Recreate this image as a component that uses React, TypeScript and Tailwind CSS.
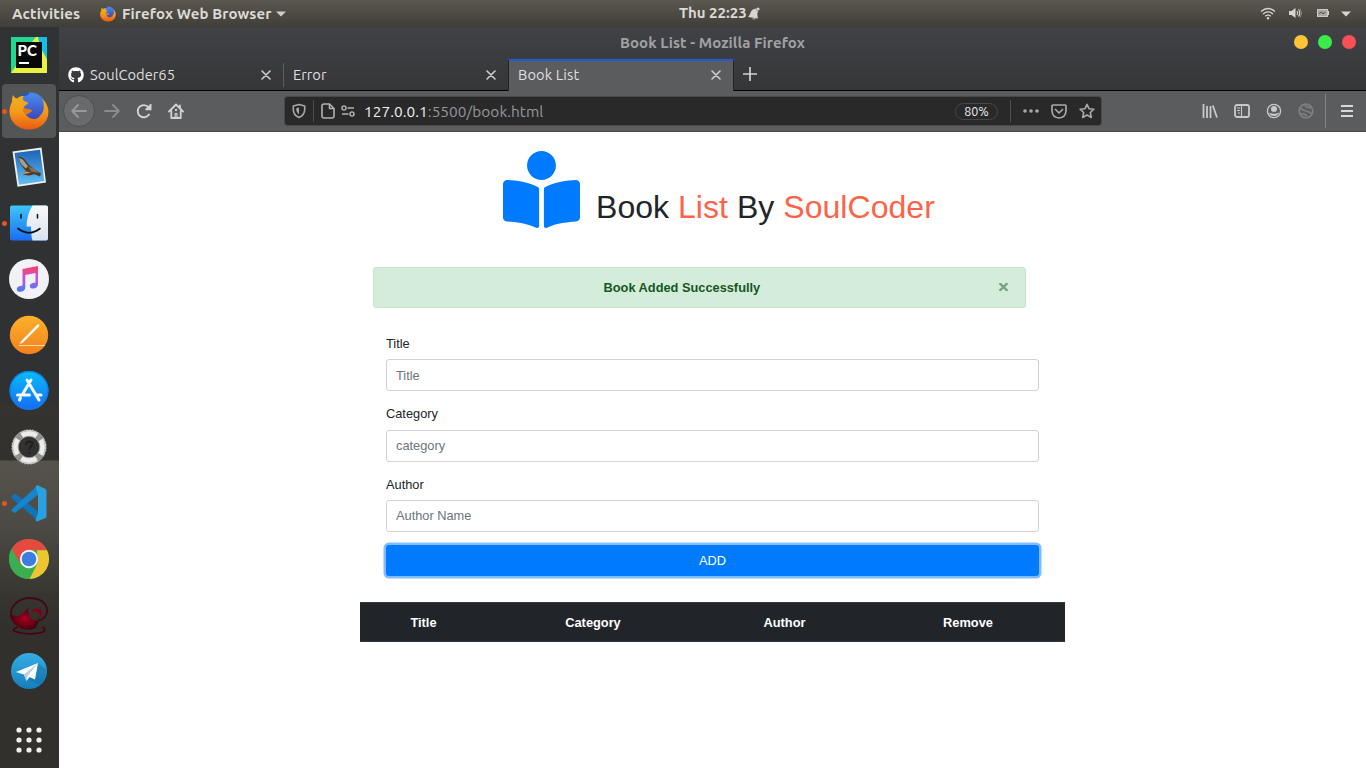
import React from "react";
import { FaBookReader, FaGithub } from "react-icons/fa";

const UI = "font-['Ubuntu','Noto_Sans',sans-serif]";

function FirefoxLogo({ size, id }: { size: number; id: string }) {
  return (
    <svg width={size} height={size} viewBox="0 0 40 40">
      <defs>
        <linearGradient id={`${id}o`} x1="0" y1="0" x2="0" y2="1">
          <stop offset="0" stopColor="#f0b01c" />
          <stop offset="0.5" stopColor="#f39a1b" />
          <stop offset="1" stopColor="#ea5a12" />
        </linearGradient>
        <linearGradient id={`${id}b`} x1="0" y1="0" x2="0" y2="1">
          <stop offset="0" stopColor="#4a8df0" />
          <stop offset="1" stopColor="#3b43b8" />
        </linearGradient>
      </defs>
      <ellipse cx="21.500" cy="15.500" rx="14.500" ry="14" fill={`url(#${id}b)`} />
      <path d="M9 6Q14 1 21 1.500L19 4L14 5.500L12 8Z" fill="#2a55b0" />
      <path
        d="M4 4C5 6 6 7 8 7.500C10 5.500 12 5 15 5C13.500 6.500 13.500 8 14.500 9.500C16 10.800 18.800 10.500 19 12C18.500 13.800 15 14.500 14.700 17C16 18 18 17.800 20 18.500C22 18.500 23 19.300 22.500 20.500C21 20.500 20 23.200 16.500 23C20 28.500 26 29.500 30 26C31 24 33.500 23 34.500 19C35 15 35 11 33 7.500C37 11 39.500 16 39.500 21C39 32 31 38.500 20 38.500C9 38.500 .5 31 .5 20.500C.5 16 2 13 3 11C3 8 3.300 6 4 4Z"
        fill={`url(#${id}o)`}
      />
      <path d="M14.500 17C16 18 18 17.800 20 18.500C22 18.500 23 19.300 22.500 20.500C20.500 20.500 20 23 16.500 23C14.500 22 13 19 14.500 17Z" fill="#e97a12" />
    </svg>
  );
}

function PyCharm() {
  return (
    <svg width="40" height="40" viewBox="0 0 40 40">
      <rect x="2" y="2" width="36" height="36" fill="#21d789" />
      <path d="M22 8L27 2H29L31 8L38 24V38H2L9 28Z" fill="#e9f23e" />
      <path d="M29 2H38V24L31 12Z" fill="#14bfe8" />
      <path d="M2 2H26L20 8L7 28L2 34Z" fill="#22d88f" />
      <rect x="7" y="7" width="26" height="26" fill="#080808" />
      <text x="8.500" y="21" fontFamily="Lato, Liberation Sans, sans-serif" fontWeight="900" fontSize="15" fill="#fff">PC</text>
      <rect x="10" y="27" width="10" height="2" fill="#fff" />
    </svg>
  );
}

function MailStamp() {
  return (
    <svg width="40" height="40" viewBox="0 0 40 40">
      <defs>
        <linearGradient id="stamp" x1="0" y1="0" x2="0" y2="1">
          <stop offset="0" stopColor="#1d62b8" />
          <stop offset="1" stopColor="#62bff5" />
        </linearGradient>
      </defs>
      <path d="M3.500 4.500L32.500 0.500L37 35.500L8.500 39.800Z" fill="#f1f1ec" />
      <path d="M5.500 6L31 2.700L35.300 34L10 37.800Z" fill="url(#stamp)" />
      <path d="M9.500 9.500C13 9.500 16 12 18 15.500C20 18.500 23 20 25 22L32 26.500L31 29.500L25 27C21 29.500 17 28 14 27.500L17 24C13 20 10 15 9.500 9.500Z" fill="#4b3b27" />
      <path d="M10 11C15 12 16 16 19 19L17 21.500C13 19 10.500 15 10 11Z" fill="#a59f8e" />
      <path d="M19 19.500L25 21.500L30 26L22 24.500Z" fill="#876d49" />
      <path d="M13 27.500L17 24.500L22 25.500Z" fill="#d69a42" />
    </svg>
  );
}

function Finder() {
  return (
    <svg width="40" height="40" viewBox="0 0 40 40">
      <defs>
        <linearGradient id="finderL" x1="0" y1="0" x2="0" y2="1">
          <stop offset="0" stopColor="#3ec6fa" />
          <stop offset="1" stopColor="#1b6df2" />
        </linearGradient>
        <linearGradient id="finderR" x1="0" y1="0" x2="0" y2="1">
          <stop offset="0" stopColor="#f7f8fa" />
          <stop offset="1" stopColor="#d9e3ee" />
        </linearGradient>
      </defs>
      <rect x="1" y="2.500" width="38" height="35" rx="2" fill="url(#finderL)" />
      <path d="M23.500 2.500H37Q39 2.500 39 4.500V35.500Q39 37.500 37 37.500H23.500Q22 33 22 23.500H17.500Q18 11 23.500 2.500Z" fill="url(#finderR)" />
      <path d="M12 11.500V15M28.500 11.500V15" stroke="#111" strokeWidth="1.500" strokeLinecap="round" />
      <path d="M9 25.500Q20 34 31 25.500" fill="none" stroke="#111" strokeWidth="1.600" strokeLinecap="round" />
    </svg>
  );
}

function Music() {
  return (
    <svg width="40" height="40" viewBox="0 0 40 40">
      <defs>
        <linearGradient id="note" x1="0" y1="0" x2="0" y2="1">
          <stop offset="0" stopColor="#fb4062" />
          <stop offset="0.5" stopColor="#c356dd" />
          <stop offset="1" stopColor="#3a80f6" />
        </linearGradient>
      </defs>
      <circle cx="20" cy="20" r="20" fill="#f2f2f6" />
      <path d="M13.500 10L29 7V25C29 30.500 20.500 31 20.800 27C21 24 24.500 24 26.500 23.500V14L16.300 16V28.500C16.300 33.500 7.500 34.500 7.800 30C8 27 11.500 27.200 13.500 26.500Z" fill="url(#note)" />
    </svg>
  );
}

function Pages() {
  return (
    <svg width="40" height="40" viewBox="0 0 40 40">
      <defs>
        <linearGradient id="pages" x1="0" y1="0" x2="0" y2="1">
          <stop offset="0" stopColor="#fcb02c" />
          <stop offset="1" stopColor="#f3821c" />
        </linearGradient>
      </defs>
      <circle cx="20" cy="20" r="19.200" fill="url(#pages)" />
      <path d="M10 30.500H36" stroke="#fbd9a6" strokeWidth="1" />
      <path d="M10.500 29L12.500 25.800L28 10Q30 8.500 30.300 9.800Q30.500 11 29.500 12L14 27.500Z" fill="#fff" />
    </svg>
  );
}

function AppStore() {
  return (
    <svg width="40" height="40" viewBox="0 0 40 40">
      <defs>
        <linearGradient id="store" x1="0" y1="0" x2="0" y2="1">
          <stop offset="0" stopColor="#06bdfc" />
          <stop offset="1" stopColor="#176bf5" />
        </linearGradient>
      </defs>
      <circle cx="20" cy="19.500" r="19.500" fill="url(#store)" />
      <circle cx="20" cy="19.500" r="18.900" fill="none" stroke="#0b7ee8" strokeWidth="1.200" />
      <g stroke="#f5f8fb" strokeWidth="3" strokeLinecap="round" fill="none">
        <path d="M18 9L30 29M22 9L14 22.500M11.500 27L10.500 29M8.500 24H20.500M27 24H32" />
      </g>
    </svg>
  );
}

function Lifebuoy() {
  return (
    <svg width="40" height="40" viewBox="0 0 40 40">
      <circle cx="20" cy="20" r="17.300" fill="none" stroke="#8a8a88" strokeWidth="1" strokeDasharray="2 1" />
      <circle cx="20" cy="20" r="13.800" fill="none" stroke="#ececec" strokeWidth="6.400" />
      <circle cx="20" cy="20" r="13.800" fill="none" stroke="#8f918f" strokeWidth="6.400" strokeDasharray="5.500 16.180" strokeDashoffset="-8" />
      <circle cx="20" cy="20" r="16.300" fill="none" stroke="#8d8d8b" strokeWidth="1" strokeOpacity="0.500" />
      <circle cx="20" cy="20" r="10.800" fill="none" stroke="#8d8d8b" strokeWidth="0.800" />
      <path d="M17 18Q17 14.500 20.500 14.500Q24.500 15 23 18.500Q20 20.500 20.500 23M20.500 25V27" fill="none" stroke="#1e1e1c" strokeWidth="1.800" />
    </svg>
  );
}

function VSCode() {
  return (
    <svg width="40" height="40" viewBox="0 0 40 40">
      <path d="M2.500 13L6 10.500L30 29V38L27.500 36.500L2.500 15Z" fill="#1173b8" />
      <path d="M2.500 26.500L27.500 3.500L30 11L6 30L2.500 28Z" fill="#1585cc" />
      <path d="M28 2L36.500 6Q37.500 6.500 37.500 8V33Q37.500 34.500 36.500 35L28 38.500Q27 38.500 26.500 37L29 30V11L26.500 4Z" fill="#29a0e0" />
    </svg>
  );
}

function Chrome() {
  return (
    <svg width="40" height="40" viewBox="0 0 40 40">
      <circle cx="20" cy="20" r="20" fill="#3aae50" />
      <path d="M2.700 10A20 20 0 0 1 38 11.200H20L11.500 25Z" fill="#e64a3f" />
      <path d="M38 11.200A20 20 0 0 1 20.500 40L28.700 24L28 11.200Z" fill="#edc52f" />
      <path d="M2.700 10L11.500 25.500Q16 31 24 30L20 40A20 20 0 0 1 2.700 10Z" fill="#3aae50" />
      <circle cx="20" cy="20" r="9.200" fill="#f5f5f5" />
      <circle cx="20" cy="20" r="7.300" fill="#3b7de0" />
    </svg>
  );
}

function RedSwirl() {
  return (
    <svg width="40" height="40" viewBox="0 0 40 40">
      <defs>
        <radialGradient id="swirl">
          <stop offset="0" stopColor="#a8001c" />
          <stop offset="1" stopColor="#4a0012" />
        </radialGradient>
      </defs>
      <path d="M9 32Q2 34 6 36.500Q20 41 34 37Q38 34 33 32" fill="none" stroke="#4a0014" strokeWidth="1.800" />
      <path d="M9 30C2 27 0 17 4 11.500C9 4 18 2 26 3.500C36 5.500 40 13 37.500 19C36 23 32 25 29 25.500" fill="none" stroke="#43061a" strokeWidth="1.800" />
      <path d="M9 21C12 20 16 17 19 13C19 19 21 23 25 25L30 26C27 31 29 34 20 34.500C13 35 11 33 9 31C5 28 2 24 2 19C5 21 7 21 9 21Z" fill="url(#swirl)" />
      <path d="M22 16.500Q26 11.500 31.500 14.500Q34.500 17 31 23Q30.500 17 26.500 16.500Z" fill="#7f0015" />
    </svg>
  );
}

function Telegram() {
  return (
    <svg width="40" height="40" viewBox="0 0 40 40">
      <defs>
        <linearGradient id="tg" x1="0" y1="0" x2="0" y2="1">
          <stop offset="0" stopColor="#35aee2" />
          <stop offset="1" stopColor="#147ebc" />
        </linearGradient>
      </defs>
      <circle cx="20" cy="20" r="18" fill="url(#tg)" />
      <path d="M29 12L37.500 19Q38 28 31 34L20 29Z" fill="#10639a" fillOpacity="0.350" />
      <path d="M7 21L29 12L26 28.500L20.500 26L17.500 30L15 23.500Z" fill="#fff" />
      <path d="M15 23.500L29 12L18.500 25L17.500 30Z" fill="#b9cfdf" />
    </svg>
  );
}

const dock: { name: string; icon: React.ReactNode; running?: boolean; active?: boolean }[] = [
  { name: "pycharm", icon: <PyCharm /> },
  { name: "firefox", icon: <FirefoxLogo size={40} id="dk" />, running: true, active: true },
  { name: "mail", icon: <MailStamp /> },
  { name: "files", icon: <Finder />, running: true },
  { name: "music", icon: <Music /> },
  { name: "pages", icon: <Pages /> },
  { name: "store", icon: <AppStore /> },
  { name: "help", icon: <Lifebuoy /> },
  { name: "code", icon: <VSCode />, running: true },
  { name: "chrome", icon: <Chrome /> },
  { name: "swirl", icon: <RedSwirl /> },
  { name: "telegram", icon: <Telegram /> },
];

function Dock() {
  return (
    <aside className="flex w-[59px] shrink-0 flex-col bg-[linear-gradient(to_bottom,#303233_0px,#2f3132_374px,#35332f_378px,#33312e_433px,#56534c_434px,#4c4a44_500px,#373530_570px,#32302c_600px,#32302c_741px)]">
      {dock.map((d) => (
        <div key={d.name} className="relative flex h-14 w-[58px] shrink-0 items-center justify-center">
          <div className={d.active ? "flex h-[54px] w-[54px] items-center justify-center rounded-[4px] bg-[#545555]" : "flex h-[54px] w-[54px] items-center justify-center"}>
            {d.icon}
          </div>
          {d.running && <span className="absolute top-[26px] left-[2px] h-[5px] w-[5px] rounded-full bg-[#e95420]" />}
        </div>
      ))}
      <svg className="mt-[28px] ml-[16px]" width="26" height="26" viewBox="0 0 26 26" fill="#f0f0ee">
        {[3, 13, 23].map((y) => [3, 13, 23].map((x) => <circle key={`${x}-${y}`} cx={x} cy={y} r="2.600" />))}
      </svg>
    </aside>
  );
}

function TopBar() {
  return (
    <header className={`flex h-[27px] shrink-0 items-center bg-[linear-gradient(to_bottom,#5a574e,#3f3e39)] text-[15px] font-bold whitespace-nowrap text-[#dcdad5] ${UI}`}>
      <div className="w-[88px] pt-[2px] pl-3 tracking-[0.150px]">Activities</div>
      <div className="flex w-[591px] items-center pl-3">
        <FirefoxLogo size={16} id="tb" />
        <span className="ml-[6px] w-[154px] pt-[2px] tracking-[0.120px]">Firefox Web Browser</span>
        <svg width="10" height="6" viewBox="0 0 10 6"><path d="M0 0.500H10L5 5.500Z" fill="#d0cec8" /></svg>
      </div>
      <span className="w-[69px]">Thu 22:23</span>
      <svg width="12" height="13" viewBox="0 0 12 13">
        <path d="M0 10C3 8 1.500 3 6.500 2L8 1.500Q8 3.500 10 4C9.500 6 9 7 10 11.500Z" fill="#d6d4ce" />
        <circle cx="10" cy="2" r="1.600" fill="#d6d4ce" />
        <path d="M4 11.500H8Q6 13.500 4 11.500Z" fill="#d6d4ce" />
      </svg>
      <div className="ml-auto flex items-center pr-[15px]">
        <svg width="16" height="13" viewBox="0 0 16 13" fill="none" stroke="#d6d4ce" strokeWidth="1.300">
          <path d="M1 4.500Q8 -1.500 15 4.500M3 7Q8 2.800 13 7M5.200 9.300Q8 7 10.800 9.300" />
          <circle cx="8" cy="11.300" r="1.200" fill="#d6d4ce" stroke="none" />
        </svg>
        <svg className="mb-px ml-[13px]" width="14" height="12" viewBox="0 0 14 12">
          <path d="M0 4H2.500L6.500 1V11L2.500 8H0Z" fill="#d6d4ce" />
          <path d="M8 4Q9.500 6 8 8M9.500 2.500Q12 6 9.500 9.500" fill="none" stroke="#d6d4ce" strokeWidth="1.200" />
          <path d="M11 1.500Q14 6 11 10.500" fill="none" stroke="#8f8d85" strokeWidth="1" />
        </svg>
        <svg className="mb-px ml-[14px]" width="12" height="8" viewBox="0 0 12 8">
          <rect x="0.500" y="0.500" width="10" height="7" fill="#a9a7a0" stroke="#c9c7c1" />
          <rect x="11" y="2" width="1" height="4" fill="#d6d4ce" />
          <path d="M2 4.500L4.500 3L6 5L8.500 3" fill="none" stroke="#4a4943" strokeWidth="1" />
        </svg>
        <svg className="ml-[12px]" width="10" height="6" viewBox="0 0 10 6"><path d="M0 0.500H10L5 5.500Z" fill="#d6d4ce" /></svg>
      </div>
    </header>
  );
}

function Close() {
  return (
    <svg className="ml-auto" width="10" height="10" viewBox="0 0 10 10" stroke="#cfcfd0" strokeWidth="1.600" strokeLinecap="round">
      <path d="M1 1L9 9M9 1L1 9" />
    </svg>
  );
}

function Tabs() {
  return (
    <div className={`flex h-8 shrink-0 text-[14.700px] whitespace-nowrap text-[#dfdfdf] ${UI}`}>
      <div className="flex w-[225px] items-center border-b border-black pt-px pr-[13px] pl-[9px]">
        <FaGithub size={16} color="#fff" />
        <span className="ml-[6px]">SoulCoder65</span>
        <Close />
      </div>
      <div className="flex w-[224px] items-center border-b border-black pt-px">
        <span className="-ml-px h-6 w-px bg-[#5d5e60]" />
        <span className="ml-[9px]">Error</span>
        <div className="mr-[12px] ml-auto"><Close /></div>
      </div>
      <div className="flex w-[226px] items-center border-x border-t-2 border-x-[#242426] border-t-[#2559d0] bg-[#5b5c5e] pr-[12px] pb-[2px] pl-[9px]">
        <span className="tracking-[0.100px]">Book List</span>
        <Close />
      </div>
      <div className="flex flex-1 items-center border-b border-black pb-[1px] pl-[9px]">
        <svg width="14" height="14" viewBox="0 0 14 14" stroke="#d2d2d3" strokeWidth="1.700"><path d="M7 0V14M0 7H14" /></svg>
      </div>
    </div>
  );
}

function NavBar() {
  return (
    <div className={`flex h-[41px] shrink-0 items-center border-b border-[#48494b] bg-[#5b5c5e] pl-1 ${UI}`}>
      <div className="flex h-8 w-8 items-center justify-center rounded-full border border-[#4d4e50] bg-[#696a6c]">
        <svg width="16" height="14" viewBox="0 0 16 14" fill="none" stroke="#98999a" strokeWidth="1.800" strokeLinecap="round" strokeLinejoin="round"><path d="M15 7H1.500M7 1L1.200 7L7 13" /></svg>
      </div>
      <svg className="ml-[9px]" width="16" height="14" viewBox="0 0 16 14" fill="none" stroke="#8b8c8d" strokeWidth="1.800" strokeLinecap="round" strokeLinejoin="round"><path d="M1 7H14.500M9 1L14.800 7L9 13" /></svg>
      <svg className="ml-4" width="16" height="16" viewBox="0 0 16 16">
        <path d="M13 11.500A6.100 6.100 0 1 1 12.500 4.200" fill="none" stroke="#d2d2d3" strokeWidth="1.900" strokeLinecap="round" />
        <path d="M15.500 1V7.200H9.300V6L14.300 1Z" fill="#d2d2d3" />
      </svg>
      <svg className="ml-4" width="16" height="16" viewBox="0 0 16 16" fill="none" stroke="#d2d2d3" strokeWidth="1.800" strokeLinecap="round" strokeLinejoin="round">
        <path d="M1 8.500L8 1.500L15 8.500M3.300 8V15H12.700V8M12 2.500V4.500" />
        <path d="M7.200 14V10.500H9V14" strokeWidth="1.200" />
        <rect x="7" y="6" width="2" height="2" fill="#d2d2d3" stroke="none" />
      </svg>
      <div className="ml-[101px] flex h-[28px] w-[816px] items-center rounded-[3px] bg-[#29292a] pl-[7px] whitespace-nowrap shadow-[0_0_0_1px_#48494b]">
        <svg width="14" height="16" viewBox="0 0 14 16" fill="none" stroke="#a9a9aa" strokeWidth="1.600" strokeLinejoin="round">
          <path d="M7 1.500L12.700 3V6.500Q12.700 12 7 14.500Q1.300 12 1.300 6.500V3Z" />
          <path d="M7 4.500V11.500Q4.500 9.500 4.300 7V5.200Z" fill="#a9a9aa" stroke="none" />
        </svg>
        <span className="ml-[7px] h-[22px] w-px bg-[#4c4c4d]" />
        <svg className="ml-[7px]" width="14" height="16" viewBox="0 0 14 16" fill="none" stroke="#b1b1b2" strokeWidth="1.600" strokeLinejoin="round">
          <path d="M3 1H8.500L13 5.500V13Q13 15 11 15H3Q1 15 1 13V3Q1 1 3 1Z" />
          <path d="M8.500 1V5.500H13" />
        </svg>
        <svg className="ml-[6px]" width="14" height="12" viewBox="0 0 14 12" fill="none" stroke="#a9a9aa" strokeWidth="1.600">
          <circle cx="3" cy="3" r="2" /><path d="M6.500 3H13" />
          <circle cx="11" cy="9" r="2" /><path d="M1 9H7.500" />
        </svg>
        <span className="ml-[9px] w-[591px] pt-[2px] text-[15.400px] leading-none tracking-[0.040px] text-[#96979a]"><span className="text-[#f1f1f2]">127.0.0.1</span>:5500/book.html</span>
        <span className="flex h-[17px] w-[43px] items-center justify-center rounded-full border border-[#47474a] text-[12.500px] text-[#ededee]">80%</span>
        <span className="ml-[12px] h-[22px] w-px bg-[#515152]" />
        <svg className="ml-[12px]" width="16" height="4" viewBox="0 0 16 4" fill="#a9a9aa"><circle cx="2" cy="2" r="1.800" /><circle cx="8" cy="2" r="1.800" /><circle cx="14" cy="2" r="1.800" /></svg>
        <svg className="ml-3" width="16" height="15" viewBox="0 0 16 15" fill="none" stroke="#a9a9aa" strokeWidth="1.700" strokeLinecap="round" strokeLinejoin="round">
          <path d="M2 1H14Q15 1 15 2V7Q14.500 13.500 8 14Q1.500 13.500 1 7V2Q1 1 2 1Z" /><path d="M4.500 5.500L8 9L11.500 5.500" />
        </svg>
        <svg className="ml-3" width="16" height="16" viewBox="0 0 16 16" fill="none" stroke="#a9a9aa" strokeWidth="1.600" strokeLinejoin="round">
          <path d="M8 1.300L10 5.700L14.900 6.200L11.300 9.500L12.300 14.500L8 12L3.700 14.500L4.700 9.500L1.100 6.200L6 5.700Z" />
        </svg>
      </div>
      <svg className="ml-[101px]" width="16" height="14" viewBox="0 0 16 14" stroke="#c9c9ca" strokeWidth="1.800" fill="none"><path d="M1.500 0V14M5 2V14M8.500 2V14M10.800 1.500L15 13.500" /></svg>
      <svg className="ml-4" width="16" height="14" viewBox="0 0 16 14" stroke="#c9c9ca" fill="none"><rect x="1" y="1" width="14" height="12" rx="2" strokeWidth="1.800" /><path d="M7.500 1V13M3 4H6M3 6.500H6M4 9H6" strokeWidth="1.100" /></svg>
      <svg className="ml-4" width="16" height="16" viewBox="0 0 16 16"><circle cx="8" cy="8" r="6.600" fill="none" stroke="#c9c9ca" strokeWidth="1.300" /><circle cx="8" cy="6" r="3" fill="#c9c9ca" /><path d="M3 9.500Q8 12 13 9.500Q12 13 8 13Q4 13 3 9.500Z" fill="#c9c9ca" /></svg>
      <svg className="ml-4" width="16" height="16" viewBox="0 0 16 16" fill="none" stroke="#7e7f81" strokeWidth="1.700"><circle cx="8" cy="8" r="6.800" /><path d="M2 5Q4 7 8 8T14 11M7 2Q8 5 14 4.500M2 12Q5 9.500 9 13" /></svg>
      <span className="ml-[11px] h-[34px] w-px bg-[#838486]" />
      <svg className="ml-[15px]" width="12" height="12" viewBox="0 0 12 12" stroke="#d8d8d9" strokeWidth="2"><path d="M0 1H12M0 6H12M0 11H12" /></svg>
    </div>
  );
}

function Field({ label, placeholder }: { label: string; placeholder: string }) {
  return (
    <label className="flex h-[70.4px] flex-col">
      <span className="mb-[6.2px] h-[19px] leading-[19px]">{label}</span>
      <input className="h-8 w-full rounded-[3px] border border-[#ced4da] bg-white px-[9px] outline-none placeholder:text-[#6c757d] placeholder:opacity-100" placeholder={placeholder} />
    </label>
  );
}

function BookPage() {
  return (
    <main className="flex-1 overflow-hidden bg-white pl-[301px] font-['Liberation_Sans',Arial,sans-serif] text-[12.800px] text-[#212529]">
      <h1 className="flex h-[96px] items-end pl-[143px] text-[32px] leading-[38px] whitespace-nowrap">
        <FaBookReader className="mb-[0.5px]" size={77} color="#007bff" />
        <span className="ml-[16px] pb-[2px] tracking-[0.040px]">
          Book <span className="text-[#ff6347]">List</span> By <span className="text-[#ff6347]">SoulCoder</span>
        </span>
      </h1>
      <div className="mt-[39px] ml-[13px] flex h-[41px] w-[653px] items-center rounded-[3px] border border-[#c3e6cb] bg-[#d4edda] pr-[14px] text-[#155724]">
        <strong className="ml-[229.5px]">Book Added Successfully</strong>
        <svg className="mr-[3px] mb-px ml-auto" width="9" height="8" viewBox="0 0 9 8" stroke="#76a383" strokeWidth="2.300"><path d="M0.500 0L8.500 8M8.500 0L0.500 8" /></svg>
      </div>
      <form className="mt-[26px] ml-[26px] w-[653px]" onSubmit={(e) => e.preventDefault()}>
        <Field label="Title" placeholder="Title" />
        <Field label="Category" placeholder="category" />
        <Field label="Author" placeholder="Author Name" />
        <button className="-mt-[0.200px] block h-[31px] w-full rounded-[3px] bg-[#007bff] text-white shadow-[0_0_0_2.500px_#80bdff]">ADD</button>
      </form>
      <table className="mt-[26px] w-[705px] table-fixed border-collapse bg-[#212529] text-white">
        <thead>
          <tr className="h-[39px] border-y border-[#32383e]">
            <th className="w-[127px] px-0 pt-[2px] pb-0">Title</th>
            <th className="w-[212px] px-0 pt-[2px] pb-0">Category</th>
            <th className="w-[171px] px-0 pt-[2px] pb-0">Author</th>
            <th className="w-[195px] pt-[2px] pr-0 pb-0 pl-px">Remove</th>
          </tr>
        </thead>
      </table>
    </main>
  );
}

export default function App() {
  return (
    <div className="flex h-[768px] w-[1366px] flex-col overflow-hidden">
      <TopBar />
      <div className="flex min-h-0 flex-1">
        <Dock />
        <div className="flex min-w-0 flex-1 flex-col">
          <div className="flex flex-col bg-[linear-gradient(to_bottom,#404246,#363637)]">
            <div className={`flex h-8 items-center text-[15px] font-bold text-[#a1a2a4] ${UI}`}>
              <span className="ml-[561px] tracking-[0.070px] whitespace-nowrap">Book List - Mozilla Firefox</span>
              <div className="mr-[10px] mb-[2px] ml-auto flex gap-[10px]">
                <span className="h-[14px] w-[14px] rounded-full bg-[#fcc436]" />
                <span className="h-[14px] w-[14px] rounded-full bg-[#3aeb4b]" />
                <span className="h-[14px] w-[14px] rounded-full bg-[#f85057]" />
              </div>
            </div>
            <Tabs />
          </div>
          <NavBar />
          <BookPage />
        </div>
      </div>
    </div>
  );
}
